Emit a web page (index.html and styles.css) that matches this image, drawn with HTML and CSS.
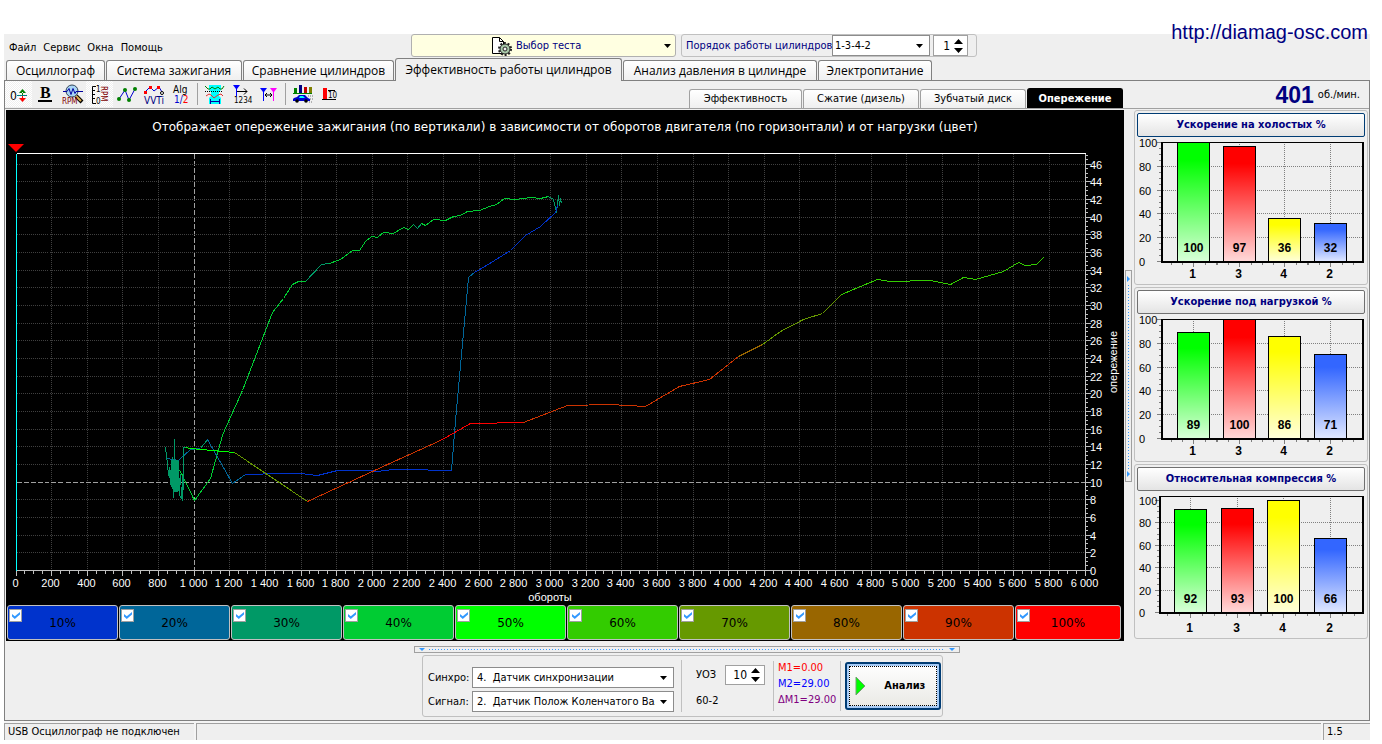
FILE: index.html
```html
<!DOCTYPE html>
<html lang="ru">
<head>
<meta charset="utf-8">
<title>Осциллограф</title>
<link rel="stylesheet" href="styles.css">
</head>
<body>
<div class="app">
  <a class="site" href="#">http://diamag-osc.com</a>
  <header class="menubar">
    <nav class="menu">
      <button>Файл</button><button>Сервис</button><button>Окна</button><button>Помощь</button>
    </nav>
    <button class="test-select">
      <svg class="test-icon" width="21" height="20" viewBox="0 0 21 20"><path d="M1.500 1.500h7l4 4v12h-11z" fill="#fff" stroke="#000"/><path d="M8.500 1.500v4h4" fill="none" stroke="#000"/><circle cx="14" cy="13" r="5" fill="#a9c9a9" stroke="#222" stroke-width="1"/><circle cx="14" cy="13" r="6" fill="none" stroke="#222" stroke-width="2" stroke-dasharray="2 1.770"/><circle cx="14" cy="13" r="2" fill="#efefef" stroke="#222"/></svg>
      <span>Выбор теста</span>
      <svg class="test-arrow" width="7" height="4" viewBox="0 0 7 4"><path d="M0 0h7L3.500 4z"/></svg>
    </button>
    <div class="order">
      <label for="order">Порядок работы цилиндров</label>
      <select id="order" class="combo order-combo"><option>1-3-4-2</option></select>
      <span class="spin order-spin"><input aria-label="Номер цилиндра" value="1"><svg width="9" height="14" viewBox="0 0 9 14"><path d="M0 5h9L4.500 0zM0 9h9L4.500 14z"/></svg></span>
    </div>
  </header>

  <nav class="tabs">
    <button class="t1">Осциллограф</button><button class="t2">Система зажигания</button><button class="t3">Сравнение цилиндров</button><button class="t4 active">Эффективность работы цилиндров</button><button class="t5">Анализ давления в цилиндре</button><button class="t6">Электропитание</button>
  </nav>

  <main class="page">
    <div class="bar">
      <div class="tools">
        <button class="pressed" aria-label="Смещение нуля"><svg width="22" height="22" viewBox="0 0 22 22"><text x="2" y="16" font-size="12">0</text><path d="M9 11.500h10" stroke="#008080"/><path d="M11 9h7l-3.500-4zM14 8h1v3h-1z" fill="#008000"/><path d="M11 14h7l-3.500 4zM14 12h1v3h-1z" fill="red"/></svg></button>
        <button aria-label="Жирные линии"><svg width="22" height="22" viewBox="0 0 22 22"><text x="5" y="14" class="serif" font-size="16">B</text><path d="M3 17h14" stroke="#000" stroke-width="2"/></svg></button>
        <button aria-label="Поиск оборотов"><svg width="22" height="22" viewBox="0 0 22 22"><path d="M14 12l6 6" stroke="#000" stroke-width="4"/><path d="M14 12l5 5" stroke="#e0b050" stroke-width="2"/><circle cx="10" cy="7" r="6" fill="#a8d4f5" stroke="#345"/><path d="M1 7.500h4l2-3 2 6 2-6 2 5 1-2h7" fill="none" stroke="#0000a0"/><text x="0" y="20" font-size="8" fill="#800000">RPM</text></svg></button>
        <button class="pressed" aria-label="Шкала оборотов"><svg width="22" height="22" viewBox="0 0 22 22"><path d="M7 2.500H3.500v17H7M4 6.500h2M4 10.500h2M4 14.500h2" fill="none" stroke="#000"/><text x="7" y="8" font-size="8">1</text><text x="7" y="20" font-size="8">0</text><text transform="translate(12 2) rotate(90)" font-size="8" fill="#800000">RPM</text></svg></button>
        <button aria-label="График по точкам"><svg width="22" height="22" viewBox="0 0 22 22"><path d="M3 15l6-9 4 10 6-11" fill="none" stroke="#0000d0"/><g fill="#008000"><circle cx="3" cy="15" r="2"/><circle cx="9" cy="6" r="2"/><circle cx="13" cy="16" r="2"/><circle cx="19" cy="5" r="2"/></g></svg></button>
        <button aria-label="VVTi"><svg width="22" height="22" viewBox="0 0 22 22"><path d="M2 8l5-5 4 4 5-4 3 5" fill="none" stroke="#0000d0"/><path d="M1 7h3v3H1zM6 2h3v3H6zM14 2h3v3h-3z" fill="red"/><circle cx="19" cy="9" r="1.500" fill="#fff" stroke="#000"/><text x="1" y="20" font-size="10" fill="#000080">VVTi</text></svg></button>
        <button aria-label="Алгоритм 1/2"><svg width="22" height="22" viewBox="0 0 22 22"><text x="3" y="9" font-size="10">Alg</text><text x="4" y="19" font-size="10" fill="#0000d0">1/<tspan fill="red">2</tspan></text></svg></button>
        <i class="sep"></i>
        <button aria-label="Область"><svg width="22" height="22" viewBox="0 0 22 22"><path d="M5 1h12v5l-2 2v4l2 2v6H5v-6l2-2V8L5 6z" fill="#00ffff"/><path d="M1 2l3 3h2l2-2 3 2 3-2 2 2h2l2-3" fill="none" stroke="#008000"/><path d="M2 12l3-2 2 1 3 3 4-3 3-1 2 2" fill="none" stroke="#e03030"/><path d="M1 7.500h18" stroke="#000" stroke-dasharray="1 1"/><path d="M6.500 15v5M15.500 15v5M7 17.500h8" stroke="#0000a0"/></svg></button>
        <button aria-label="Порядок цилиндров"><svg width="22" height="22" viewBox="0 0 22 22"><path d="M2 1h7L6 5v7H5V5z" fill="#0000ff"/><path d="M6 7.500h10M13 4.500l3 3-3 3" fill="none" stroke="#000"/><text x="3" y="19" font-size="8">1234</text></svg></button>
        <button aria-label="Маркеры"><svg width="22" height="22" viewBox="0 0 22 22"><path d="M2 4h7L6 8v9H5V8z" fill="#0000ff"/><path d="M12 4h7l-3 4v9h-1V8z" fill="#ff00ff"/><path d="M7 11h7M9 9l-2 2 2 2M12 9l2 2-2 2" fill="none" stroke="#000"/></svg></button>
        <i class="sep"></i>
        <button aria-label="Разгон"><svg width="22" height="22" viewBox="0 0 22 22"><path d="M2 4h3v6H2z" fill="#008000"/><path d="M7 1h3v9H7z" fill="#000080"/><path d="M12 3h3v7h-3z" fill="#c00000"/><path d="M17 3h3v7h-3z" fill="#808000"/><path d="M1 9.500h19" stroke="#008000"/><path d="M2 14l3-1 2-2h6l3 3 2 1v2H1v-2z" fill="#0000d0"/><path d="M8 12h3l2 2H7z" fill="#0ff"/><circle cx="5" cy="17" r="1.800"/><circle cx="14" cy="17" r="1.800"/><path d="M16 12h5M18 15h3M17 18h4" stroke="#777" stroke-dasharray="1 1"/></svg></button>
        <button aria-label="Усреднение"><svg width="22" height="22" viewBox="0 0 22 22"><path d="M4 4h4v11H4z" fill="red"/><path d="M3 15.500h14M9 6.500h7" stroke="#000"/><text x="9" y="14" font-size="8">10</text></svg></button>
      </div>
      <nav class="subtabs">
        <button class="s1">Эффективность</button><button class="s2">Сжатие (дизель)</button><button class="s3">Зубчатый диск</button><button class="s4 active">Опережение</button>
      </nav>
      <div class="rpm"><output>401</output><span>об./мин.</span></div>
    </div>

    <div class="work">
      <section class="scope">
        <h1>Отображает опережение зажигания (по вертикали) в зависимости от оборотов двигателя (по горизонтали) и от нагрузки (цвет)</h1>
        <svg id="scope" class="plot" viewBox="6 143 1118 461" role="img" aria-label="График опережения"></svg>
        <div class="loads" id="loads"></div>
      </section>
      <div class="vsplit"><i></i></div>
      <aside class="side">
        <section class="panel"><button class="focus">Ускорение на холостых %</button><svg data-values="100,97,36,32"></svg></section>
        <section class="panel"><button>Ускорение под нагрузкой %</button><svg data-values="89,100,86,71"></svg></section>
        <section class="panel"><button>Относительная компрессия %</button><svg data-values="92,93,100,66" data-headroom="4"></svg></section>
      </aside>
    </div>

    <div class="hsplit"><i></i></div>
    <footer class="controls">
      <div class="channels">
        <label for="sync">Синхро:</label><select id="sync" class="combo"><option>4.&nbsp; Датчик синхронизации</option></select>
        <label for="sig">Сигнал:</label><select id="sig" class="combo"><option>2.&nbsp; Датчик Полож Коленчатого Вала</option></select>
      </div>
      <div class="uoz">
        <label for="uoz">УОЗ</label>
        <span class="spin"><input id="uoz" value="10"><svg width="9" height="14" viewBox="0 0 9 14"><path d="M0 5h9L4.500 0zM0 9h9L4.500 14z"/></svg></span>
        <span>60-2</span>
      </div>
      <div class="marks"><span class="m1">M1=0.00</span><span class="m2">M2=29.00</span><span class="dm">ΔM1=29.00</span></div>
      <div class="go"><button><svg width="11" height="20" viewBox="0 0 11 20"><path d="M1 1v18l9-9z" fill="#00ff00" stroke="#70a070"/></svg><span>Анализ</span></button></div>
    </footer>
  </main>
  <div class="status"><span class="st1">USB Осциллограф не подключен</span><span></span><span>1.5</span></div>
</div>
<script src="charts.js"></script>
</body>
</html>
```
FILE: styles.css
```css
* { box-sizing: border-box; }
body { margin: 0; background: #fff; color: #000; font: 11px/14px "DejaVu Sans Condensed", "DejaVu Sans", sans-serif; }
button, input, select { font: inherit; color: inherit; margin: 0; }
button { padding: 0; border: 0; background: none; white-space: nowrap; }
svg { display: block; }
.app { position: relative; margin: 34px 12px 0 4px; background: #efefef; }
.site { position: absolute; right: 2px; top: -14px; color: #000080; font: 20px/24px "Liberation Sans", Arial, sans-serif; text-decoration: none; }

.menubar { display: flex; height: 24px; align-items: flex-start; }
.menu { display: flex; gap: 7px; width: 407px; padding: 7px 0 0 5px; }
.test-select { display: flex; align-items: center; width: 265px; height: 23px; padding: 0 4px 0 79px; border: 1px solid #b0b0b0; border-radius: 3px; background: #ffffe1; color: #000080; }
.test-select span { margin-left: 4px; }
.test-arrow { margin-left: auto; fill: #000; }
.order { display: flex; align-items: center; height: 23px; margin-left: 5px; padding: 0 8px 0 4px; border: 1px solid #c0c0c0; border-radius: 3px; color: #000080; }
.order label { width: 146px; white-space: nowrap; }
.combo { appearance: none; height: 21px; padding: 0 18px 0 4px; border: 1px solid #8c8c8c; border-radius: 0; color: #000; background: #fff url("data:image/svg+xml,%3Csvg xmlns='http://www.w3.org/2000/svg' width='7' height='4'%3E%3Cpath d='M0 0h7L3.500 4z'/%3E%3C/svg%3E") no-repeat right 6px center; text-overflow: clip; }
.order-combo { width: 98px; padding-left: 2px; }
.spin { display: flex; align-items: center; width: 40px; height: 20px; border: 1px solid #a0a0a0; background: #fff; color: #000; padding-right: 4px; }
.spin input { flex: 1; min-width: 0; border: 0; padding: 0 4px 0 0; text-align: right; background: none; outline: 0; font-size: 12px; }
.order-spin { width: 35px; height: 21px; margin-left: 3px; }

.tabs { display: flex; height: 22px; align-items: flex-end; padding-left: 2px; gap: 1px; font: 12px/16px "Open Sans", "DejaVu Sans", sans-serif; }
.tabs button { height: 20px; border: 1px solid #808080; border-bottom: 0; border-radius: 3px 3px 0 0; background: linear-gradient(#fff, #efefef); }
.tabs .active { height: 23px; margin-bottom: -1px; background: #efefef; z-index: 1; }
.t1 { width: 99px; } .t2 { width: 136px; } .t3 { width: 151px; } .t4 { width: 227px; } .t5 { width: 194px; } .t6 { width: 114px; }

.page { border: 1px solid #808080; }
.bar { display: flex; height: 28px; border-bottom: 1px solid #a0a0a0; }
.tools { display: flex; flex: 1; align-items: flex-start; }
.tools button { display: flex; justify-content: center; width: 27px; height: 26px; padding-top: 3px; }
.tools .pressed { background: repeating-conic-gradient(#fff 0 25%, #efefef 0 50%) 0 0 / 2px 2px; }
.tools text { font-family: "DejaVu Sans Condensed", sans-serif; }
.tools .serif { font-family: "Liberation Serif", serif; font-weight: bold; }
.sep { width: 1px; height: 22px; margin: 2px 3px 0; background: #a0a0a0; }
.subtabs { display: flex; align-items: flex-end; gap: 1px; }
.subtabs button { height: 19px; border: 1px solid #a0a0a0; border-bottom: 0; border-radius: 3px 3px 0 0; background: linear-gradient(#fff, #efefef); }
.subtabs .active { height: 20px; background: #000; border-color: #000; color: #fff; font-weight: bold; }
.s1 { width: 113px; } .s2 { width: 116px; } .s3 { width: 106px; } .s4 { width: 96px; }
.rpm { display: flex; width: 246px; justify-content: flex-end; align-items: center; gap: 4px; padding: 1px 9px 0 0; }
.rpm output { color: #000080; font: bold 23px/26px "Liberation Sans", Arial, sans-serif; }

.work { display: grid; grid-template-columns: minmax(0, 1fr) 10px 234px; padding: 1px 1px 0; }
.scope { background: #000; }
.scope h1 { margin: 0; padding: 9px 0 0; height: 33px; color: #fff; text-align: center; font: 12px/16px "DejaVu Sans", sans-serif; white-space: nowrap; }
.plot { width: 100%; height: auto; font: 11px "Liberation Sans", Arial, sans-serif; }
.loads { display: grid; grid-template-columns: repeat(9, 112fr) 107fr; gap: 1px; padding: 1px 3px 1px 1px; }
.loads label { position: relative; display: flex; align-items: center; justify-content: center; height: 35px; border: 1px solid #c0c0c0; border-radius: 3px; font: 12px/16px "DejaVu Sans", sans-serif; }
.loads input { appearance: none; position: absolute; left: 1px; top: 3px; width: 13px; height: 13px; margin: 0; border: 1px solid #a0a0a0; background: #fff; }
.loads input:checked::after { content: ""; position: absolute; left: 2px; top: 2px; width: 8px; height: 7px; background: #3399ff; clip-path: polygon(0 30%, 35% 60%, 100% 0, 100% 35%, 35% 100%, 0 65%); }
.l1 { background: #03c; } .l2 { background: #069; } .l3 { background: #096; } .l4 { background: #0c3; } .l5 { background: #0f0; }
.l6 { background: #3c0; } .l7 { background: #690; } .l8 { background: #960; } .l9 { background: #c30; } .l10 { background: red; }
.vsplit { display: flex; align-items: center; }
.vsplit i { display: flex; flex-direction: column; justify-content: space-between; width: 7px; height: 212px; margin-left: 1px; padding: 5px 0 4px 1px; border: 1px solid #a0a0a0; background: repeating-linear-gradient(#39f 0 1px, transparent 1px 3px) 2px 14px / 1px 184px no-repeat; }
.vsplit i::before, .vsplit i::after { content: ""; border: 3px solid transparent; border-left: 3px solid #39f; border-right: 0; width: 0; height: 0; }
.side { display: flex; flex-direction: column; gap: 2px; }
.panel { padding: 2px; border: 1px solid #c0c0c0; border-radius: 3px; }
.panel > button { display: block; width: 100%; height: 24px; border: 1px solid #707070; border-radius: 2px; background: linear-gradient(#fff, #e4e4e4); color: #000080; font-weight: bold; }
.panel > .focus { border-color: #003c74; }
.panel svg { width: 100%; height: auto; margin-top: 1px; font: 11px "Liberation Sans", Arial, sans-serif; }
.panel svg .num { font: bold 12px "Liberation Sans", Arial, sans-serif; }

.hsplit { display: flex; justify-content: center; padding: 5px 0 0; }
.hsplit i { display: flex; justify-content: space-between; width: 546px; height: 7px; border: 1px solid #a0a0a0; background: repeating-linear-gradient(90deg, #39f 0 1px, transparent 1px 3px) 14px 2px / 516px 1px no-repeat; padding: 1px 4px; }
.hsplit i::before, .hsplit i::after { content: ""; border: 3px solid transparent; border-top-color: #39f; border-bottom: 0; width: 0; height: 0; }
.controls { display: flex; width: 521px; height: 62px; margin: 2px 0 3px calc(50% - 265px); padding: 4px 3px 4px 5px; border: 1px solid #c0c0c0; border-radius: 3px; align-items: center; }
.channels { display: grid; grid-template-columns: 44px 202px; gap: 3px 0; align-items: center; padding: 7px 7px 0 0; border-right: 1px solid #c0c0c0; }
.channels .combo { min-width: 0; }
.uoz { display: grid; grid-template-columns: 29px 40px; gap: 9px 0; align-items: center; padding: 0 8px 0 14px; width: 96px; }
.marks { display: flex; flex-direction: column; gap: 2px; padding: 0 4px; width: 70px; height: 50px; border: solid #c0c0c0; border-width: 0 1px; white-space: nowrap; }
.m1 { color: red; } .m2 { color: #00f; } .dm { color: #800080; }
.go { padding-left: 4px; }
.go button { display: flex; align-items: center; gap: 18px; width: 96px; height: 48px; padding-left: 8px; border: 2px solid #003c74; border-radius: 3px; outline: 1px dotted #000; outline-offset: -5px; background: linear-gradient(#fff, #e9e9e4); box-shadow: inset 0 0 0 2px #a8cdf8; font-weight: bold; }

.status { display: grid; grid-template-columns: 190px 1fr 47px; gap: 2px; padding: 2px 0 0; background: #f4f4f4; }
.status span { height: 17px; padding-left: 3px; border: 1px solid #a0a0a0; border-width: 1px 0 0 1px; line-height: 16px; background: #efefef; }
```
FILE: charts.js
```js
const NS = "http://www.w3.org/2000/svg";
function add(parent, tag, attrs, text) {
  const el = document.createElementNS(NS, tag);
  for (const k in attrs) el.setAttribute(k, attrs[k]);
  if (text !== undefined) el.textContent = text;
  parent.appendChild(el);
  return el;
}
function line(parent, x1, y1, x2, y2, stroke, dash) {
  const a = { d: `M${x1} ${y1}L${x2} ${y2}`, stroke, fill: "none", "shape-rendering": "crispEdges" };
  if (dash) a["stroke-dasharray"] = dash;
  add(parent, "path", a);
}

/* Ignition advance against engine speed */
const s = document.getElementById("scope");
const L = 16.5, R = 1085.5, T = 153.5, B = 570.5;
const px = r => Math.floor(16 + r * 1069 / 6000) + 0.5;
const py = v => Math.floor(570.4 - v * 8.83) + 0.5;
for (let r = 0; r <= 6000; r += 200) {
  const x = px(r);
  if (r) line(s, x, T, x, B, r === 1000 ? "#a0a0a0" : "#404040", r === 1000 ? "5 2" : "1 1");
  line(s, x, B, x, B + 5, "#c0c0c0");
  if (r < 6000) for (let k = 50; k < 200; k += 50) line(s, px(r + k), B, px(r + k), B + 3, "#c0c0c0");
  const label = r < 1000 ? String(r) : Math.floor(r / 1000) + " " + String(r % 1000).padStart(3, "0");
  add(s, "text", { x: x - 1, y: 587, fill: "#fff", "text-anchor": "middle" }, label);
}
for (let v = 0; v <= 47; v += 0.5) {
  const y = py(v), major = v % 2 === 0;
  if (major && v) line(s, L, y, R, y, v === 10 ? "#a0a0a0" : "#404040", v === 10 ? "5 2" : "1 1");
  line(s, R, y, R + (major ? 5 : 2), y, "#c0c0c0");
  if (major) add(s, "text", { x: 1090, y: y + 4, fill: "#fff", "font-size": 11 }, v);
}
line(s, L, T, R, T, "#fff");
line(s, R, T, R, B, "#c0c0c0");
line(s, L, B, R, B, "#c0c0c0");
line(s, L, T, L, B, "#0ff");
add(s, "path", { d: "M8 144h16l-8 8z", fill: "red" });
add(s, "text", { x: 550, y: 601, fill: "#fff", "text-anchor": "middle" }, "обороты");
add(s, "text", { transform: "translate(1117 362) rotate(-90)", fill: "#fff", "text-anchor": "middle" }, "опережение");

const traces = [
  ["#0c3", "179,470 181,473 194,500 210,478 222,435 224,430 242,390 272,312 283,298 292,284 298,281 305,281"],
  ["#096", "305,281 321,264 329,263"],
  ["#0c3", "329,263 340,259 352,250 359,250 365,241 371,236 377,237 383,232 393,233 403,227 408,229 413,224"],
  ["#096", "413,224 417,228 421,223"],
  ["#0c3", "421,223 425,225 433,219 445,220 453,216 460,215 467,211 479,210 489,206 496,204 504,198 515,199 530,197 540,198 548,196"],
  ["#096", "548,196 553,199 556,212 558,195 559,205 560,198 561,203"],
  ["#069", "167,458 178,460 190,449 200,448"],
  ["#096", "200,448 207,439"],
  ["#069", "207,439 232,483 245,474"],
  ["#03c", "245,474 280,473 300,473 317,475 337,470 368,470 377,471 393,469 425,469 430,470 451,470"],
  ["#069", "451,470 455,420 468,277 474,272"],
  ["#03c", "474,272 486,265 510,250 525,235 540,226 555,212 557,205"],
  ["#0f0", "184,447 190,448 234,452"],
  ["#690", "234,452 307,501"],
  ["#c30", "307,501 387,464 440,440"],
  ["red", "440,440 470,423 523,422"],
  ["#c30", "523,422 567,405 610,404 645,406 679,386 709,379 738,356"],
  ["#960", "738,356 762,344"],
  ["#690", "762,344 780,331 803,319 822,313 841,294"],
  ["#3c0", "841,294 860,286 877,279 890,281 930,280 950,284 963,277 975,279 1003,271 1018,262"],
  ["#3c0", "1018,262 1025,265 1036,264 1043,257"],
  ["#096", "165,447 167,463 168,475 169,467 170,484 171,460 172,488 172,457 173,497 174,439 174,491 175,461 175,491 176,460 176,491 177,460 177,491 178,461 178,490 180,474 179,495 181,498 182,476 182,500 183,480 183,447 185,447"]
];
for (const [stroke, points] of traces)
  add(s, "polyline", { points, stroke, fill: "none", "shape-rendering": "crispEdges", transform: "translate(.5 .5)" });
add(s, "path", { d: "M171 462h2v-2h4v31h-4v-4h-2zM169 470h2v8h-2z", fill: "#096" });

/* Load legend */
const loads = document.getElementById("loads");
for (let i = 1; i <= 10; i++) {
  const l = document.createElement("label");
  l.className = "l" + i;
  l.innerHTML = `<input type="checkbox" checked><span>${i * 10}%</span>`;
  loads.appendChild(l);
}

/* Per-cylinder bar charts */
const colors = ["#00ff00", "#ff0000", "#ffff00", "#3366ff"];
const cylinders = ["1", "3", "4", "2"];
document.querySelectorAll(".panel svg").forEach((g, n) => {
  g.setAttribute("viewBox", "0 0 228 144");
  const head = Number(g.dataset.headroom || 0);
  const top = 4, left = head ? 22 : 24, bottom = head ? 121 : 124;
  const zero = bottom - 1, full = top + head, first = head ? 53 : 56;
  const y = v => Math.round(zero - v * (zero - full) / 100) + 0.5;
  const step = (193 - first) / 3;
  for (let v = 0; v <= 100; v += 5) line(g, left - (v % 20 ? 2 : 4), y(v), left, y(v), "#808080");
  for (let v = 0; v <= 100; v += 20) {
    if (v && v < 100) line(g, left, y(v), 225, y(v), "#808080", "1 1");
    add(g, "text", { x: 2, y: y(v) + 4 }, v);
  }
  const defs = add(g, "defs", {});
  g.dataset.values.split(",").map(Number).forEach((v, i) => {
    const c = Math.round(first + i * step) + 0.5;
    const grad = add(defs, "linearGradient", { id: `g${n}${i}`, x2: 0, y2: 1 });
    add(grad, "stop", { offset: "0.15", "stop-color": colors[i] });
    add(grad, "stop", { offset: "1", "stop-color": colors[i], "stop-opacity": "0.15" });
    line(g, c, top, c, bottom, "#808080", "1 1");
    line(g, c, bottom, c, bottom + 5, "#808080");
    for (const d of [-0.5, -0.25, 0.25, 0.5]) line(g, Math.round(c + d * step) + 0.5, bottom, Math.round(c + d * step) + 0.5, bottom + 3, "#808080");
    add(g, "rect", { x: c - 16, y: y(v), width: 32, height: zero - y(v) + 0.5, fill: "#fff" });
    add(g, "rect", { x: c - 16, y: y(v), width: 32, height: zero - y(v) + 0.5, fill: `url(#g${n}${i})`, stroke: "#000" });
    add(g, "text", { x: c, y: bottom - 10, "text-anchor": "middle", class: "num" }, v);
    add(g, "text", { x: c - 1, y: 140, "text-anchor": "middle", class: "num" }, cylinders[i]);
  });
  line(g, left, top + 0.5, 226, top + 0.5, "#000");
  add(g, "path", { d: `M${left + 0.5} ${top}V${bottom}M${left} ${bottom}H226V${top}`, stroke: "#000", "stroke-width": 2, fill: "none", "shape-rendering": "crispEdges" });
});
```
